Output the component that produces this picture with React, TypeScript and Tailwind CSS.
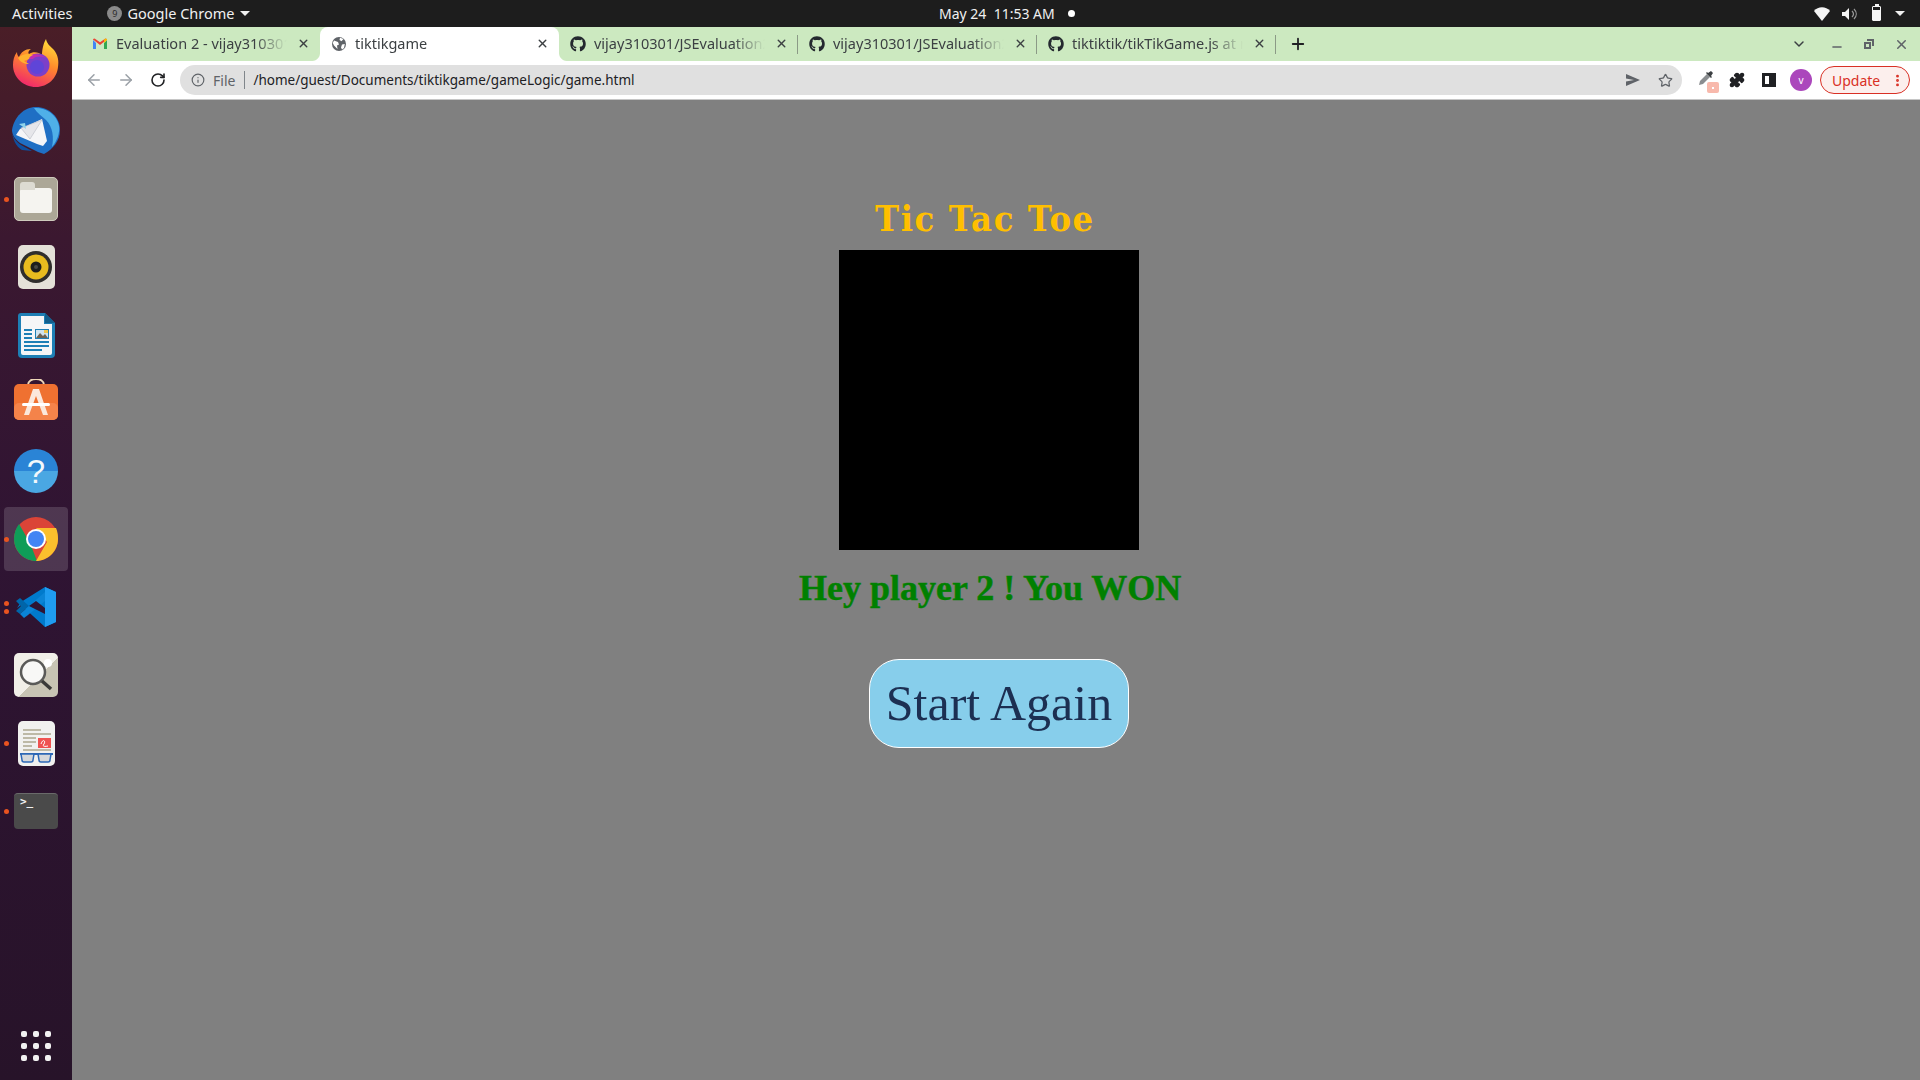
import React from 'react';
import { ArrowLeft, ArrowRight, RotateCw, Info, Star, X, Plus, ChevronDown, Minus, EllipsisVertical, Puzzle } from 'lucide-react';
import { FaGithub } from 'react-icons/fa';

const ui = { fontFamily: '"Noto Sans", sans-serif' };

function Gmail() {
  return (
    <svg width="16" height="16" viewBox="0 0 16 16">
      <path d="M1 4v9h3V7z" fill="#4285f4" />
      <path d="M12 7v6h3V4z" fill="#34a853" />
      <path d="M1 3.500 8 9l7-5.500V3l-1.600-.6L8 6.300 2.600 2.400 1 3z" fill="#ea4335" />
      <path d="M12 3.800 13.400 2.400 15 3.200V4l-3 3z" fill="#fbbc04" />
    </svg>
  );
}

function Globe() {
  return (
    <svg width="16" height="16" viewBox="0 0 16 16">
      <circle cx="8" cy="8" r="7" fill="#5f6368" />
      <path d="M3 4.500 7 6l1 2.500-2 1 .5 3.500L3 9.500 1.800 7zM9 1.800l3.500 1.200-2 2.200L8.500 4zM11 8.500l2.800-.5L13 12l-2 1.500-1-2z" fill="#fff" />
    </svg>
  );
}

function Tab({ icon, title, active, divider }: { icon: React.ReactNode; title: string; active?: boolean; divider?: boolean }) {
  return (
    <div className={`relative flex h-[34px] w-[239px] shrink-0 items-center pb-[1px] pl-[11px] pr-[9px] ${active ? 'rounded-t-[8px] bg-white' : ''}`}>
      {active && (
        <>
          <div className="absolute bottom-0 left-[-8px] h-[8px] w-[8px] bg-[radial-gradient(circle_at_0_0,#cce9c0_7.5px,#ffffff_8.5px)]" />
          <div className="absolute bottom-0 right-[-8px] h-[8px] w-[8px] bg-[radial-gradient(circle_at_100%_0,#cce9c0_7.5px,#ffffff_8.5px)]" />
        </>
      )}
      <span className="flex w-[16px] shrink-0 items-center justify-center">{icon}</span>
      <span className="ml-[8px] w-[178px] overflow-hidden whitespace-nowrap text-[14.5px] text-[#3c4043] [mask-image:linear-gradient(to_right,black_78%,transparent_96%)]">{title}</span>
      <X size={13} strokeWidth={2.6} className="ml-[3px] text-[#3c4043]" />
      {divider && <div className="absolute right-0 top-[8px] h-[19px] w-px bg-[#8b9a86]" />}
    </div>
  );
}

function Firefox() {
  return (
    <svg width="48" height="50" viewBox="0 0 48 50">
      <defs>
        <linearGradient id="ff" x1="0.7" y1="0" x2="0.3" y2="1">
          <stop offset="0" stopColor="#ffdc3a" />
          <stop offset="0.45" stopColor="#ff8a2b" />
          <stop offset="1" stopColor="#f0246e" />
        </linearGradient>
      </defs>
      <path d="M34 1c1 5 4 7 8 11 4 5 5 11 4 17-1 11-10 20-22 20C11 49 1 39 1 27c0-5 1-9 4-13 0 3 1 4 2 5 2-5 6-8 12-8-3 2-3 4-2 5 4-3 10-2 13 1 0-4 1-11 4-16z" fill="url(#ff)" />
      <circle cx="26" cy="27" r="11.500" fill="#7c3fc9" />
      <circle cx="25" cy="29" r="7" fill="#5f45d8" />
      <path d="M14 20c5-5 14-5 20 0-5-2-10-2-13 1-3 0-5 0-7-1z" fill="#c22fb0" />
      <path d="M6 20c4-4 10-5 15-3-3 1-4 3-4 4l-5 2 5 3c-1 0-8 0-11-6z" fill="#ffb22e" />
    </svg>
  );
}

function Thunderbird() {
  return (
    <svg width="48" height="50" viewBox="0 0 48 50">
      <path d="M24 1c13 0 24 10 24 23 0 11-7 19-16 24l-6-2-18-9C3 33 0 29 0 24 2 11 12 1 24 1z" fill="#1f6fc4" />
      <path d="M22 2c11-1 23 6 25 18 1 7-2 15-7 21 2-9 1-20-6-27-4-4-9-7-12-12z" fill="#4fb0e8" />
      <path d="M0 24c0 6 3 11 9 15l11 6-10-1C4 41 0 32 0 24z" fill="#0f4f9e" />
      <path d="M8 23 30 13l5 22-4 5-6-2L4 29z" fill="#f5f5f7" />
      <path d="M9 22l9 11 12-19z" fill="#e6e6ea" stroke="#b9bcc4" strokeWidth="0.6" />
      <path d="M7 18l6-1 1 6z" fill="#8fd3ea" />
    </svg>
  );
}

function Files() {
  return (
    <div className="flex h-[44px] w-[44px] items-center justify-center rounded-[5px] border border-[#cfcbbd] bg-[#aca797]">
      <div className="relative mt-[3px] h-[25px] w-[32px] rounded-[3px] bg-[#f5f4f0]">
        <div className="absolute left-0 top-[-6px] h-[8px] w-[15px] rounded-t-[3px] bg-[#dddbd2]" />
      </div>
    </div>
  );
}

function Rhythmbox() {
  return (
    <div className="flex h-[44px] w-[37px] items-center justify-center rounded-[5px] bg-[#e4e1d8]">
      <svg width="32" height="32" viewBox="0 0 32 32">
        <circle cx="16" cy="16" r="16" fill="#2f2e2c" />
        <circle cx="16" cy="16" r="12.500" fill="#e8bc1f" />
        <circle cx="16" cy="16" r="5.500" fill="#1f1e1c" />
        <circle cx="16" cy="16" r="2" fill="#4a4844" />
      </svg>
    </div>
  );
}

function Writer() {
  return (
    <svg width="37" height="45" viewBox="0 0 37 45">
      <path d="M3 0h24l10 10v31a4 4 0 0 1-4 4H4a4 4 0 0 1-4-4V3a3 3 0 0 1 3-3z" fill="#1d7fb5" />
      <path d="M3 3h23v8h8v29a2 2 0 0 1-2 2H5a2 2 0 0 1-2-2z" fill="#f5f6f7" />
      <path d="M27 0l10 10H27z" fill="#135f8d" />
      <g fill="#1d7fb5">
        <rect x="6" y="16" width="8" height="2" />
        <rect x="6" y="20" width="8" height="2" />
        <rect x="6" y="24" width="8" height="2" />
        <rect x="6" y="28" width="25" height="2" />
        <rect x="6" y="32" width="25" height="2" />
        <rect x="6" y="36" width="18" height="2" />
      </g>
      <rect x="17" y="16" width="14" height="10" fill="#1d7fb5" />
      <rect x="18" y="17" width="12" height="8" fill="#cfe3ee" />
      <path d="M18 25l4-5 3 3 2-2 3 4z" fill="#6b6253" />
      <rect x="26" y="17" width="4" height="3" fill="#f0c84b" />
    </svg>
  );
}

function Software() {
  return (
    <svg width="44" height="48" viewBox="0 0 44 48">
      <path d="M14 6c0-8 16-8 16 0" fill="none" stroke="#eed7b8" strokeWidth="2" />
      <rect x="0" y="5" width="44" height="36" rx="5" fill="#ef7131" />
      <rect x="0" y="24" width="44" height="17" rx="5" fill="#f4834a" />
      <path d="M19 10h6l9 26h-5L22 17l-7 19h-5z" fill="#fbe8dc" />
      <rect x="8" y="24" width="28" height="3" rx="1.500" fill="#fff" />
    </svg>
  );
}

function Help() {
  return (
    <div className="flex h-[44px] w-[44px] items-center justify-center rounded-full bg-[linear-gradient(#2a84d6_0%,#2a84d6_50%,#4aa7e3_50%,#4aa7e3_100%)] font-['Liberation_Sans',sans-serif] text-[33px] leading-none text-[#f3f7fb]">
      ?
    </div>
  );
}

function Chrome() {
  return (
    <svg width="44" height="44" viewBox="0 0 44 44">
      <circle cx="22" cy="22" r="22" fill="#db4437" />
      <path d="M22 44C10 44 0 34 0 22 0 16 2 11 5 7l11 19 7 18z" fill="#0f9d58" />
      <path d="M22 44l11-19-11-14h20c1.500 3 2 7 2 11 0 12-10 22-22 22z" fill="#fbc02d" />
      <circle cx="22" cy="22" r="10" fill="#fff" />
      <circle cx="22" cy="22" r="8" fill="#4285f4" />
    </svg>
  );
}

function VsCode() {
  return (
    <svg width="42" height="42" viewBox="0 0 42 42">
      <path d="M30 1 41 6v30l-11 5L6 19l-4 3 4-6z" fill="#007acc" />
      <path d="M1 15l4-3 9 8-9 8-4-3 5-5z" fill="#0065a9" />
      <path d="M5 28 30 6v9L13 29l-4 3z" fill="#0a84d6" />
      <path d="M14 20l7-5 9 7v6l-6-3z" fill="#2f1433" />
      <path d="M30 1l11 5v30l-11 5z" fill="#1f9cf0" />
    </svg>
  );
}

function Magnifier() {
  return (
    <div className="relative h-[44px] w-[44px] rounded-[5px] bg-[linear-gradient(135deg,#f1efe8_55%,#c8c4b4_55%)]">
      <svg width="44" height="44" viewBox="0 0 44 44" className="absolute inset-0">
        <circle cx="19" cy="19" r="12" fill="#f8f8f6" stroke="#5a5a58" strokeWidth="2.500" />
        <path d="M28 28l9 8" stroke="#3a3a38" strokeWidth="3.500" />
        <circle cx="34" cy="10" r="4" fill="#fff" />
      </svg>
    </div>
  );
}

function Reader() {
  return (
    <svg width="37" height="45" viewBox="0 0 37 45">
      <rect width="37" height="45" rx="5" fill="#f1f1ef" />
      <g fill="#bdb9a6">
        <rect x="5" y="8" width="18" height="2" />
        <rect x="5" y="12" width="28" height="2" />
        <rect x="5" y="16" width="13" height="2" />
        <rect x="5" y="20" width="13" height="2" />
        <rect x="5" y="24" width="9" height="2" />
        <rect x="5" y="28" width="28" height="2" />
      </g>
      <rect x="20" y="17" width="13" height="10" fill="#ef5350" />
      <path d="M23 23c2-6 5-3 3 0-2 2 0 3 4 2" fill="none" stroke="#fff" strokeWidth="1" />
      <path d="M2 33h33" stroke="#2d68b6" strokeWidth="2" />
      <path d="M3 33h13l-1 6a2 2 0 0 1-2 2H6a2 2 0 0 1-2-2zM20 33h13l-1 6a2 2 0 0 1-2 2h-7a2 2 0 0 1-2-2z" fill="#d5d8da" stroke="#2d68b6" strokeWidth="1.500" />
    </svg>
  );
}

function Terminal() {
  return (
    <div className="h-[36px] w-[44px] rounded-[4px] border-t border-[#6a6a6a] bg-[#4a4a4a] pl-[6px] pt-[1px] font-['DejaVu_Sans_Mono',monospace] text-[11px] font-bold leading-[14px] text-[#f1f1f1]">
      {'>_'}
    </div>
  );
}

const dockApps: { icon: React.ReactNode; dots: number; active?: boolean }[] = [
  { icon: <Firefox />, dots: 0 },
  { icon: <Thunderbird />, dots: 0 },
  { icon: <Files />, dots: 1 },
  { icon: <Rhythmbox />, dots: 0 },
  { icon: <Writer />, dots: 0 },
  { icon: <Software />, dots: 0 },
  { icon: <Help />, dots: 0 },
  { icon: <Chrome />, dots: 1, active: true },
  { icon: <VsCode />, dots: 2 },
  { icon: <Magnifier />, dots: 0 },
  { icon: <Reader />, dots: 1 },
  { icon: <Terminal />, dots: 1 },
];

function Dock() {
  return (
    <aside className="flex w-[72px] shrink-0 flex-col items-center bg-[linear-gradient(#4a1e27_0%,#3b1830_20%,#2f1433_50%,#271329_100%)] pb-[19px] pt-[2px]">
      {dockApps.map((app, i) => (
        <div key={i} className="relative flex h-[68px] w-full items-center justify-center">
          {app.active && <div className="absolute inset-x-[4px] inset-y-[2px] rounded-[4px] bg-white/15" />}
          {app.dots > 0 && (
            <div className="absolute left-[4px] flex flex-col gap-[3px]">
              {app.dots === 2 && <span className="h-[5px] w-[5px] rounded-full bg-[#e95420]" />}
              <span className="h-[5px] w-[5px] rounded-full bg-[#e95420]" />
            </div>
          )}
          <div className="relative">{app.icon}</div>
        </div>
      ))}
      <div className="mt-auto grid grid-cols-3 gap-[6px]">
        {Array.from({ length: 9 }).map((_, i) => (
          <span key={i} className="h-[6px] w-[6px] rounded-[2px] bg-[#f2f2f2]" />
        ))}
      </div>
    </aside>
  );
}

function TopBar() {
  return (
    <header className="relative flex h-[27px] shrink-0 items-center bg-[#1d1d1d] pl-[12px] text-[14.5px] text-[#f0f0f0]">
      <span>Activities</span>
      <div className="ml-[35px] flex h-[15px] w-[15px] items-center justify-center rounded-full bg-[#8a8a8a] text-[9px] text-[#2a2a2a]">9</div>
      <span className="ml-[5px]">Google Chrome</span>
      <span className="ml-[6px] h-0 w-0 border-x-[5px] border-t-[5px] border-x-transparent border-t-[#f0f0f0]" />
      <div className="absolute left-[939px] flex items-center text-[14px]">
        <span>May 24&nbsp;&nbsp;11:53 AM</span>
        <span className="ml-[13px] h-[7px] w-[7px] rounded-full bg-white" />
      </div>
      <div className="ml-auto flex items-center pr-[15px]">
        <svg width="16" height="14" viewBox="0 0 16 14">
          <path d="M8 14 0 4c4-5 12-5 16 0z" fill="#f5f5f5" />
        </svg>
        <svg width="16" height="14" viewBox="0 0 16 14" className="ml-[12px]">
          <path d="M0 5h3l4-4v12L3 9H0z" fill="#f5f5f5" />
          <path d="M10 4c2 2 2 4 0 6M12 2c3 3 3 7 0 10" fill="none" stroke="#9a9a9a" strokeWidth="1.200" />
        </svg>
        <div className="relative ml-[14px] h-[15px] w-[9px] rounded-[1px] border border-[#f5f5f5]">
          <div className="absolute bottom-0 left-0 right-0 h-[10px] bg-[#f5f5f5]" />
          <div className="absolute left-[1.500px] top-[-3px] h-[2px] w-[4px] bg-[#f5f5f5]" />
        </div>
        <span className="ml-[14px] h-0 w-0 border-x-[5px] border-t-[5px] border-x-transparent border-t-[#f0f0f0]" />
      </div>
    </header>
  );
}

function TabStrip() {
  return (
    <div className="flex h-[34px] shrink-0 items-center bg-[#cce9c0] pl-[9px]">
      <Tab icon={<Gmail />} title="Evaluation 2 - vijay310301@gmail.com" />
      <Tab icon={<Globe />} title="tiktikgame" active />
      <Tab icon={<FaGithub size={16} className="text-[#24292f]" />} title="vijay310301/JSEvaluation2" divider />
      <Tab icon={<FaGithub size={16} className="text-[#24292f]" />} title="vijay310301/JSEvaluation2" divider />
      <Tab icon={<FaGithub size={16} className="text-[#24292f]" />} title="tiktiktik/tikTikGame.js at main" divider />
      <Plus size={18} strokeWidth={2.4} className="ml-[13px] text-[#202124]" />
      <ChevronDown size={16} strokeWidth={2.2} className="ml-auto text-[#3c4043]" />
      <Minus size={14} strokeWidth={2.4} className="ml-[23px] mt-[5px] text-[#5f6368]" />
      <svg width="12" height="12" viewBox="0 0 12 12" className="ml-[19px]">
        <path d="M4 1h7v7H9V3H4z" fill="#5f6368" />
        <path d="M1 4h7v7H1zM3 6v3h3V6z" fill="#5f6368" fillRule="evenodd" />
      </svg>
      <X size={15} strokeWidth={2.4} className="ml-[19px] mr-[11px] text-[#5f6368]" />
    </div>
  );
}

function Toolbar() {
  return (
    <div className="flex h-[39px] shrink-0 items-center border-b border-[#c6c6c6] bg-white">
      <ArrowLeft size={18} strokeWidth={2} className="ml-[13px] text-[#9aa0a6]" />
      <ArrowRight size={18} strokeWidth={2} className="ml-[14px] text-[#9aa0a6]" />
      <RotateCw size={16} strokeWidth={2.4} className="ml-[15px] text-[#202124]" />
      <div className="ml-[14px] flex h-[30px] w-[1502px] items-center rounded-full bg-[#e0e0e0] pl-[11px] text-[13.5px]">
        <Info size={14} strokeWidth={2} className="text-[#5f6368]" />
        <span className="ml-[8px] text-[14px] text-[#5f6368]">File</span>
        <span className="ml-[9px] h-[18px] w-px bg-[#80868b]" />
        <span className="ml-[8px] text-[#202124]">/home/guest/Documents/tiktikgame/gameLogic/game.html</span>
        <svg width="14" height="12" viewBox="0 0 14 12" className="ml-auto text-[#5f6368]">
          <path d="M0 0 14 6 0 12l0-4.500L8 6 0 4.500z" fill="currentColor" />
        </svg>
        <Star size={15} strokeWidth={2} className="ml-[18px] mr-[9px] text-[#5f6368]" />
      </div>
      <div className="relative ml-[16px] h-[20px] w-[18px]">
        <svg width="16" height="16" viewBox="0 0 16 16" className="absolute left-0 top-0">
          <path d="M1 15 2 11 9 4 12 7 5 14z" fill="#8a8d90" />
          <path d="M8 3l5 5 1-1-1-1 2-3-2-2-3 2-1-1z" fill="#3c4043" />
        </svg>
        <div className="absolute bottom-[-3px] right-[-3px] flex h-[11px] w-[12px] items-center justify-center rounded-[2px] bg-[#f8b9ac]">
          <span className="h-[2px] w-[2px] bg-white" />
        </div>
      </div>
      <Puzzle size={16} strokeWidth={2} className="ml-[13px] fill-[#202124] text-[#202124]" />
      <div className="ml-[17px] flex h-[14px] w-[14px] items-center justify-center border-[3px] border-[#202124]">
        <div className="ml-[4px] h-full w-[4px] bg-[#202124]" />
      </div>
      <div className="ml-[14px] flex h-[22px] w-[22px] items-center justify-center rounded-full bg-[#ab47bc] text-[10px] text-white">v</div>
      <div className="ml-[8px] flex h-[28px] w-[90px] items-center rounded-full border border-[#d93025] bg-[#fcefed] pl-[11px] text-[14px] text-[#d93025]">
        <span>Update</span>
        <EllipsisVertical size={15} strokeWidth={2.6} className="ml-auto mr-[4px]" />
      </div>
    </div>
  );
}

export default function App() {
  return (
    <div className="flex h-screen w-screen flex-col overflow-hidden bg-[#808080]" style={ui}>
      <TopBar />
      <div className="flex min-h-0 flex-1">
        <Dock />
        <div className="flex min-w-0 flex-1 flex-col">
          <TabStrip />
          <Toolbar />
          <main className="flex-1 bg-[#808080] pt-[95px]">
            <h1 className="ml-[803px] h-[55px] whitespace-nowrap font-['DejaVu_Serif',serif] text-[36px] font-bold leading-[46px] tracking-[1.6px] text-[#ffbf00] [font-stretch:condensed]">
              Tic Tac Toe
            </h1>
            <div className="ml-[767px] h-[300px] w-[300px] bg-black" />
            <p className="ml-[727px] mt-[15px] whitespace-nowrap font-['Liberation_Serif',serif] text-[36px] font-bold leading-[46px] text-[#008000] [-webkit-text-stroke:0.5px_#008000]">
              Hey player 2 ! You WON
            </p>
            <button className="ml-[797px] mt-[48px] flex h-[89px] w-[260px] items-center justify-center rounded-[30px] border border-white bg-[#87ceeb] font-['Liberation_Serif',serif] text-[50px] text-[#1c2f52]">
              Start Again
            </button>
          </main>
        </div>
      </div>
    </div>
  );
}
